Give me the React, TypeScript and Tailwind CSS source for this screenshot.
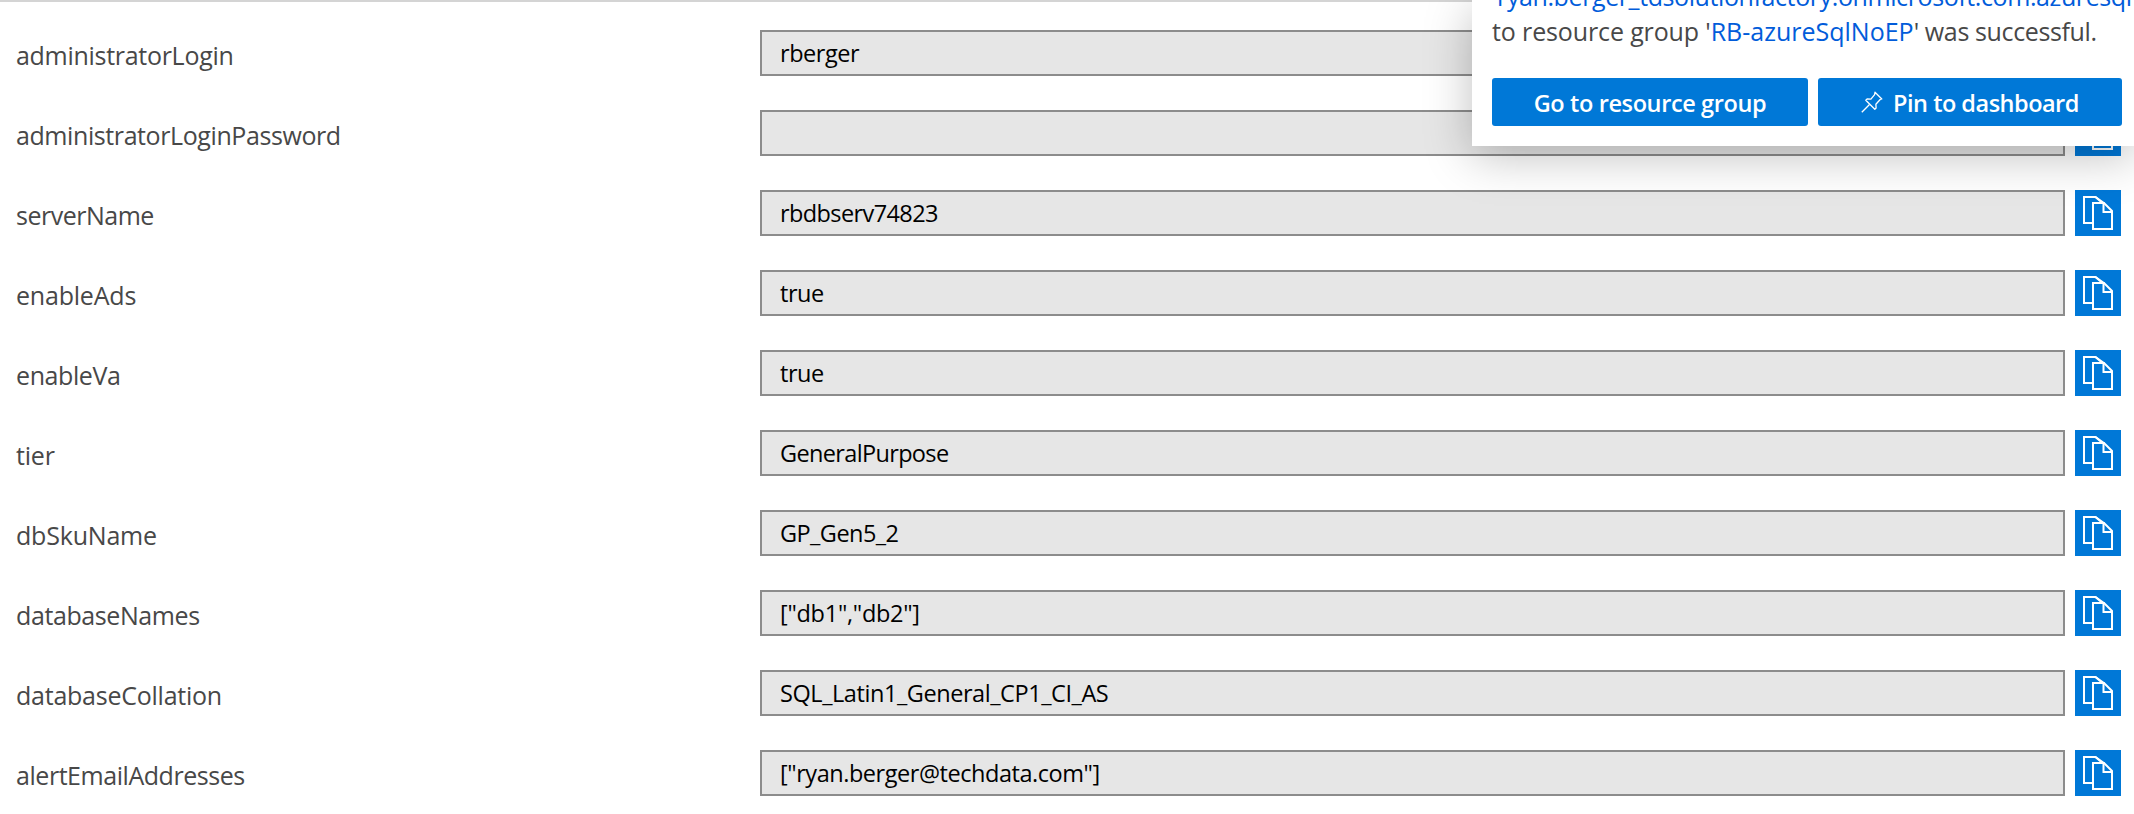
type Parameter = { name: string; nameTracking: string; value: string; valueTracking: string };

const parameters: Parameter[] = [
  { name: "administratorLogin", nameTracking: "tracking-[-0.29px]", value: "rberger", valueTracking: "tracking-[-0.45px]" },
  { name: "administratorLoginPassword", nameTracking: "tracking-[-0.41px]", value: "", valueTracking: "" },
  { name: "serverName", nameTracking: "tracking-[-0.5px]", value: "rbdbserv74823", valueTracking: "tracking-[-0.6px]" },
  { name: "enableAds", nameTracking: "tracking-[-0.2px]", value: "true", valueTracking: "tracking-[-0.5px]" },
  { name: "enableVa", nameTracking: "tracking-[-0.4px]", value: "true", valueTracking: "tracking-[-0.5px]" },
  { name: "tier", nameTracking: "tracking-[-0.2px]", value: "GeneralPurpose", valueTracking: "tracking-[-0.65px]" },
  { name: "dbSkuName", nameTracking: "tracking-[-0.2px]", value: "GP_Gen5_2", valueTracking: "tracking-[-0.55px]" },
  { name: "databaseNames", nameTracking: "tracking-[-0.4px]", value: '["db1","db2"]', valueTracking: "tracking-[-0.27px]" },
  { name: "databaseCollation", nameTracking: "tracking-[-0.24px]", value: "SQL_Latin1_General_CP1_CI_AS", valueTracking: "tracking-[-0.43px]" },
  { name: "alertEmailAddresses", nameTracking: "tracking-[-0.45px]", value: '["ryan.berger@techdata.com"]', valueTracking: "tracking-[-0.45px]" },
];

function CopyIcon() {
  return (
    <svg className="size-[46px]" viewBox="0 0 46 46" fill="none" stroke="#fff" strokeWidth="2">
      <path d="M17.5 33H9V7h11.5l7 6" />
      <path d="M18 13h11l8 8v18H18z" />
      <path d="M28.5 13.5V22H37" />
      <path d="M20.5 7l9 6.5" />
    </svg>
  );
}

function PinIcon() {
  return (
    <svg className="h-[22px] w-[22px]" viewBox="0 0 22 22" fill="none" stroke="#fff" strokeWidth="1.3" strokeLinejoin="round">
      <path d="M14 1.2l6.800 6.800-1.600.500-4.300 4.700.200 3.800-1.300 1.300-9-9 1.300-1.300 3.800.200 3.700-4.500z" />
      <path d="M8.500 13.500L.800 21.200" />
    </svg>
  );
}

function Row({ name, nameTracking, value, valueTracking }: Parameter) {
  return (
    <div className="flex h-[46px] items-start">
      <div className={`w-[744px] shrink-0 pt-2 text-[25px] leading-[34px] text-[#484848] ${nameTracking}`}>{name}</div>
      <div className={`h-[46px] w-[1305px] shrink-0 border-2 border-[#8c8c8c] bg-[#e6e6e6] pl-[18px] pt-1 text-[23.5px] leading-[34px] text-black ${valueTracking}`}>
        {value}
      </div>
      <button className="ml-[10px] size-[46px] shrink-0 bg-[#0078d7]" aria-label="Copy">
        <CopyIcon />
      </button>
    </div>
  );
}

function Notification() {
  return (
    <section className="absolute top-0 right-0 h-[146px] w-[662px] bg-white shadow-[0_10px_44px_rgba(0,0,0,0.25)]">
      <div className="flex h-full flex-col overflow-hidden pl-5">
        <div className="-mt-[21px] text-[25px] leading-[35px] whitespace-nowrap text-[#484848]">
          <p className="tracking-[-0.4px] text-[#015cda]">'ryan.berger_tdsolutionfactory.onmicrosoft.com.azuresql</p>
          <p>
            <span className="tracking-[-0.13px]">to resource group '</span>
            <span className="text-[#015cda]">RB-azureSqlNoEP</span>
            <span className="tracking-[-0.37px]">' was successful.</span>
          </p>
        </div>
        <div className="mt-[29px] flex gap-[10px] text-[23.5px] leading-[34px] font-semibold text-white">
          <button className="flex h-12 w-[316px] items-center justify-center rounded-[3px] bg-[#0078d7] pt-px tracking-[-0.38px]">
            Go to resource group
          </button>
          <button className="flex h-12 w-[304px] items-center justify-center gap-[10px] rounded-[3px] bg-[#0078d7] tracking-[-0.5px]">
            <PinIcon />
            <span className="pt-px">Pin to dashboard</span>
          </button>
        </div>
      </div>
    </section>
  );
}

export default function App() {
  return (
    <main className="relative h-[814px] w-[2134px] overflow-hidden bg-white font-['Open_Sans',sans-serif]">
      <div className="h-0.5 bg-[#d4d4d4]" />
      <div className="flex flex-col gap-[34px] pt-7 pl-4">
        {parameters.map((p) => (
          <Row key={p.name} {...p} />
        ))}
      </div>
      <Notification />
    </main>
  );
}
